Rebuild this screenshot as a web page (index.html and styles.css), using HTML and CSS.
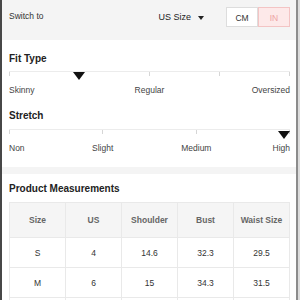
FILE: index.html
```html
<!DOCTYPE html>
<html lang="en">
<head>
  <meta charset="utf-8">
  <meta name="viewport" content="width=device-width, initial-scale=1.0">
  <title>Size &amp; Fit</title>
  <link rel="stylesheet" href="styles.css">
</head>
<body>
  <div class="page">
    <!-- Unit switcher -->
    <div class="switch-bar">
      <span class="switch-label">Switch to</span>
      <span class="size-select">US Size <span class="caret"></span></span>
      <div class="unit-toggle">
        <span class="unit">CM</span>
        <span class="unit active">IN</span>
      </div>
    </div>

    <!-- Fit and stretch scales -->
    <div class="section scales">
      <h2 class="title">Fit Type</h2>
      <div class="track">
        <div class="ticks"><i></i><i></i><i></i><i></i><i></i></div>
        <span class="pointer" style="left: 25%"></span>
      </div>
      <div class="labels fit">
        <span>Skinny</span>
        <span>Regular</span>
        <span>Oversized</span>
      </div>

      <h2 class="title stretch-title">Stretch</h2>
      <div class="track">
        <div class="ticks"><i></i><i></i><i></i><i></i></div>
        <span class="pointer end"></span>
      </div>
      <div class="labels stretch">
        <span>Non</span>
        <span>Slight</span>
        <span>Medium</span>
        <span>High</span>
      </div>
    </div>

    <div class="divider"></div>

    <!-- Measurements table -->
    <div class="section measurements">
      <h2 class="title">Product Measurements</h2>
      <table class="size-table">
        <thead>
          <tr><th>Size</th><th>US</th><th>Shoulder</th><th>Bust</th><th>Waist Size</th></tr>
        </thead>
        <tbody>
          <tr><td>S</td><td>4</td><td>14.6</td><td>32.3</td><td>29.5</td></tr>
          <tr><td>M</td><td>6</td><td>15</td><td>34.3</td><td>31.5</td></tr>
          <tr><td></td><td></td><td></td><td></td><td></td></tr>
        </tbody>
      </table>
    </div>
  </div>
</body>
</html>
```

FILE: styles.css
```css
/* Base */
html {
  background: #dcdcdc;
}

body {
  margin: 0;
  font-family: "Liberation Sans", Arial, sans-serif;
  font-size: 8.5px;
  color: #333;
  overflow: hidden;
}

.page {
  width: 294px;
  height: 300px;
  background: #fff;
  border-left: 2px solid #474747;
  border-right: 2px solid #8c8c8c;
  overflow: hidden;
}

/* Switch bar */
.switch-bar {
  display: flex;
  align-items: center;
  height: 40px;
  padding: 0 6px 8px 7px;
  box-sizing: border-box;
  background: #f4f4f4;
}

.switch-label {
  flex: 1;
  color: #333;
}

.size-select {
  display: flex;
  align-items: center;
  color: #222;
  font-size: 9px;
  margin-right: 22px;
  padding-top: 1px;
}

.caret {
  width: 0;
  height: 0;
  margin-left: 7px;
  margin-top: 2px;
  border-left: 3.5px solid transparent;
  border-right: 3.5px solid transparent;
  border-top: 4px solid #222;
}

.unit-toggle {
  display: flex;
  margin-top: 1px;
}

.unit {
  width: 32px;
  height: 20px;
  line-height: 20px;
  text-align: center;
  background: #fff;
  border: 1px solid #ddd;
  box-sizing: border-box;
  color: #333;
}

.unit.active {
  background: #fde9e9;
  border-color: #f3c4c4;
  color: #eda3a3;
}

/* Sections */
.section {
  padding: 13px 6px 13px 7px;
}

.title {
  margin: 0 0 6px;
  font-size: 10px;
  line-height: 12px;
  font-weight: bold;
  color: #222;
}

.stretch-title {
  margin-top: 14px;
  margin-bottom: 7px;
}

/* Scale track */
.track {
  position: relative;
  height: 13px;
}

.ticks {
  display: flex;
  justify-content: space-between;
  height: 4px;
  border-top: 1px solid #ececec;
}

.ticks i {
  width: 1px;
  background: #d6d6d6;
}

.pointer {
  position: absolute;
  top: 1px;
  margin-left: -6px;
  width: 0;
  height: 0;
  border-left: 6px solid transparent;
  border-right: 6px solid transparent;
  border-top: 8px solid #111;
}

.pointer.end {
  right: 0;
  top: 2px;
  margin-left: 0;
}

.labels {
  display: grid;
  line-height: 12px;
  color: #444;
}

.labels.fit {
  grid-template-columns: 1fr 2fr 1fr;
}

.labels.stretch {
  grid-template-columns: 1fr 2fr 2fr 1fr;
}

.labels span:nth-child(n+2) {
  text-align: center;
}

.labels span:last-child {
  text-align: right;
}

.divider {
  height: 7px;
  background: #f4f4f4;
}

/* Measurements */
.measurements {
  padding-top: 9px;
}

.measurements .title {
  margin-bottom: 7px;
}

.size-table {
  width: 100%;
  border-collapse: collapse;
  table-layout: fixed;
}

.size-table th,
.size-table td {
  border: 1px solid #e9e9e9;
  text-align: center;
  padding: 0;
}

.size-table th {
  height: 34px;
  background: #f5f5f5;
  color: #666;
  font-weight: bold;
}

.size-table td {
  height: 29px;
  color: #333;
}
```
